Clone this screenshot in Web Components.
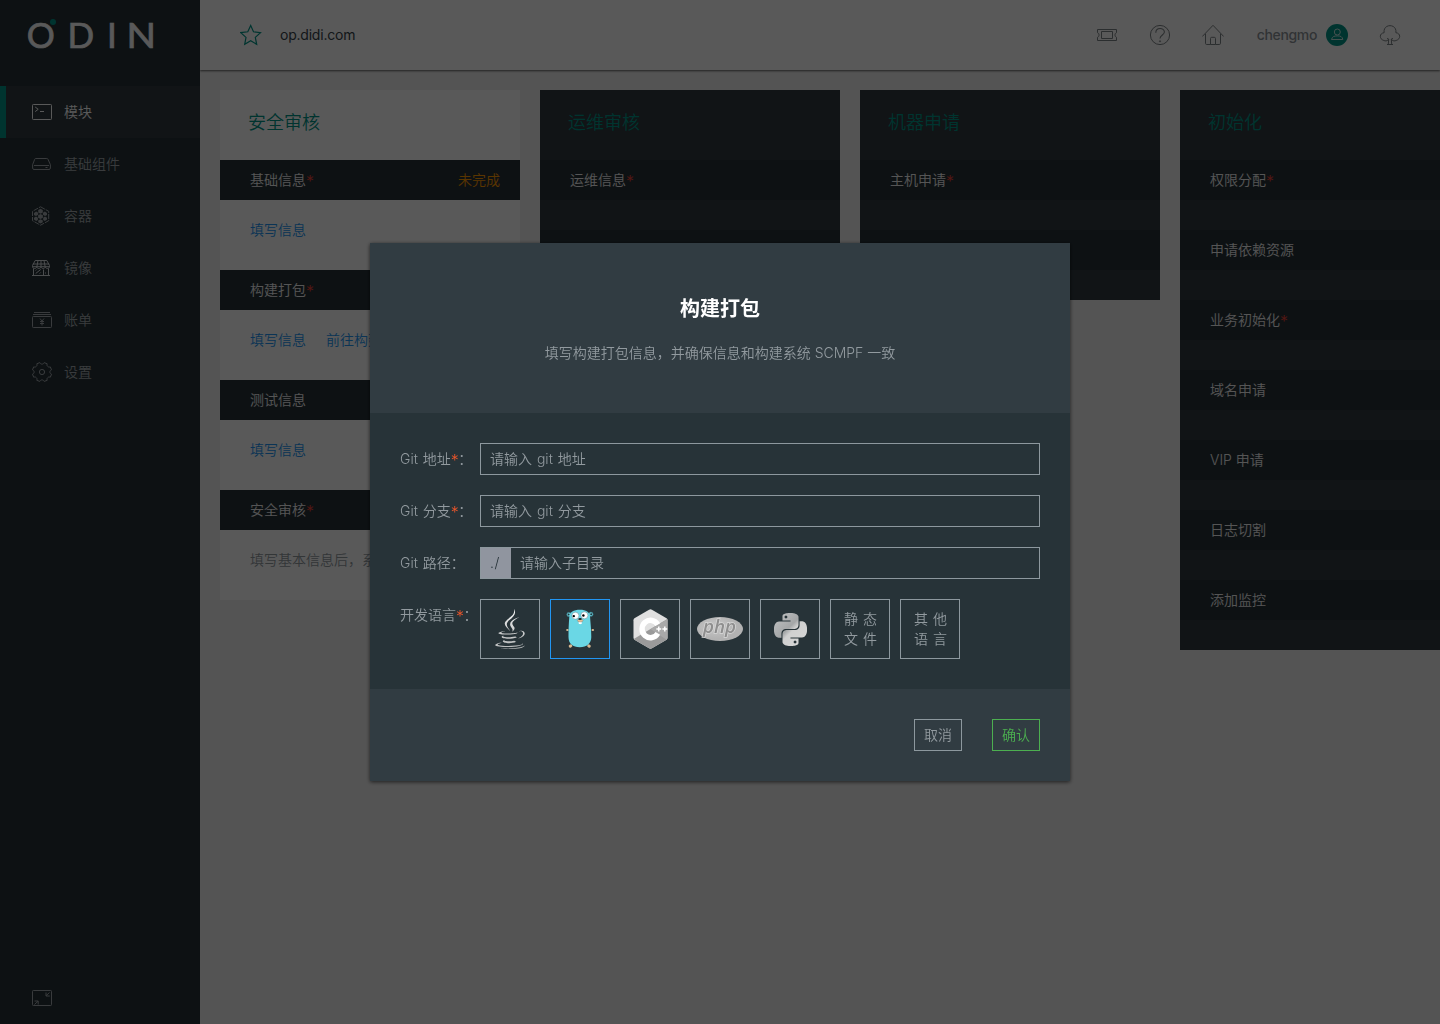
<!DOCTYPE html>
<html lang="zh-CN">
<head>
<meta charset="utf-8">
<title>ODIN</title>
<style>
html,body{margin:0;height:100%;overflow:hidden}
body{font:14px/20px Inter,"Noto Sans CJK SC",sans-serif;font-weight:350;background:#f0f0f0;
--ink:#263238;--slate:#313b40;--brand:#009688;--link:#2196f3;--mute:#929a9f;--line:#8d989e}
</style>
</head>
<body>
<odin-app></odin-app>
<odin-dialog heading="构建打包" note="填写构建打包信息，并确保信息和构建系统 SCMPF 一致">
  <form-row label="Git 地址" required><text-field>请输入 git 地址</text-field></form-row>
  <form-row label="Git 分支" required><text-field>请输入 git 分支</text-field></form-row>
  <form-row label="Git 路径"><text-field prefix="./">请输入子目录</text-field></form-row>
  <form-row label="开发语言" required>
    <lang-tile icon="java"></lang-tile><lang-tile icon="go" selected></lang-tile><lang-tile icon="cpp"></lang-tile><lang-tile icon="php"></lang-tile><lang-tile icon="python"></lang-tile><lang-tile>静 态<br>文 件</lang-tile><lang-tile>其 他<br>语 言</lang-tile>
  </form-row>
  <flat-button slot="actions">取消</flat-button>
  <flat-button slot="actions" primary>确认</flat-button>
</odin-dialog>
<script>
const svg=(w,h,body,attrs='')=>`<svg width="${w}" height="${h}" viewBox="0 0 ${w} ${h}" fill="none" stroke="currentColor" stroke-width="1" ${attrs}>${body}</svg>`;
const ICONS={
terminal:svg(20,20,'<rect x=".5" y="2.5" width="19" height="15" rx=".8"/><path d="M3.2 5l3 2.300-3 2.300M8 9.500h4"/>'),
disk:svg(20,20,'<path d="M3.600 4.500h11.200c.6 0 1 .3 1.200.8l2.400 5.400v3.400c0 .8-.6 1.400-1.400 1.400H2c-.8 0-1.400-.6-1.400-1.400v-3.400L2.700 5.300c.2-.5.5-.8.9-.8zM2 11.500h15M13.500 13.500h2"/>'),
hive:svg(20,20,'<path d="M8.500.8L16.700 5.300v9.400L8.500 19.200.5 14.700V5.300z" stroke-dasharray="5 1"/><g fill="currentColor" stroke="none"><path d="M8.500 2.800l2.300 1.300v2.400L8.500 7.800 6.200 6.500V4.100zM8.500 8l2.400 1.300v2.500l-2.400 1.300-2.400-1.300V9.300zM8.500 13.300l2.300 1.200v1.700l-2.300 1.300-2.300-1.300v-1.700zM4.200 5.600l2 1.200v2L4 10 2 8.900V7zM12.900 5.600L15 7v1.900L13 10l-2.100-1.200v-2zM4 10.600l1.900 1.100v2.300l-1.700 1L2 13.500v-1.800zM13 10.600l2 1.100v1.800L12.900 15l-1.700-1v-2.300z"/></g>'),
shop:svg(20,20,'<path d="M3.200 2.500h11.600l2.700 5v1.200H.5V7.500zM.8 6h16.400M6 2.500L5 8M9 2.500V8M12 2.500L13 8M1.500 10.500v7M16.500 10.500v7M0 17.500h18M.5 8.500c0 2.600 4.200 2.600 4.200 0 0 2.600 4.300 2.600 4.300 0 0 2.600 4.300 2.600 4.300 0 0 2.600 4.200 2.600 4.200 0M11.500 17.500v-6M3.700 15.500l5-4M3.700 12.500l1-1M7.700 15.500l1-1M13.500 14.500v1"/>','style="color:#d8dde0"'),
bill:svg(20,20,'<path d="M2 2.500h16M1 4.500h18"/><rect x=".5" y="6.500" width="19" height="11" rx=".8"/><path d="M8 8.500l2 2.500 2-2.500M10 11v4.500M8 11.500h4M8 13.500h4"/>'),
gear:svg(20,20,'<circle cx="10" cy="10" r="2.600"/><path d="M7.800.6c.7 1.300 1.300 1.500 2.200 1.500s1.500-.2 2.200-1.500l3 1.200c-.4 1.400-.2 2 .5 2.600.6.6 1.200.9 2.600.5l1.200 2.900c-1.300.7-1.600 1.300-1.600 2.200s.3 1.500 1.600 2.200l-1.200 3c-1.400-.4-2-.2-2.600.5-.7.6-.9 1.200-.5 2.600l-3 1.100c-.7-1.200-1.300-1.500-2.200-1.500s-1.500.3-2.200 1.500l-3-1.100c.4-1.400.2-2-.5-2.600-.6-.7-1.200-.9-2.600-.5l-1.200-3c1.300-.7 1.600-1.300 1.600-2.200s-.3-1.500-1.600-2.200l1.200-2.900c1.400.4 2 .1 2.600-.5.7-.6.9-1.200.5-2.600z"/>'),
collapse:svg(20,20,'<rect x=".5" y="2.500" width="19" height="15" rx=".8"/><path d="M17.500 4.500l-3.500 3.300M14 4.500v3.500h3.800M2.500 16.500L6 13.200M2.500 13h3.700v3.500"/>'),
star:svg(22,22,'<path d="M10.700 1.500l2.800 6.300 7 .8-5.200 4.800 1.400 6.900-6-3.500-6 3.500 1.300-6.900L.8 8.600l7-.8z" stroke-width="1.200"/>'),
ticket:svg(22,22,'<path d="M1.500 5.500h19v3.200c-2 .5-2 4.100 0 4.600v3.200h-19v-3.200c2-.5 2-4.100 0-4.600zM5.500 7.500h11v7h-11z"/>'),
help:svg(22,22,'<circle cx="11" cy="11" r="9.600"/><path d="M6.800 8.700c0-5.800 8.600-5.300 8.600-.6 0 2.700-4.400 3.200-4.400 6.400" stroke-width="1.100"/><circle cx="11" cy="17.300" r=".6"/>'),
home:svg(22,22,'<path d="M.3 12.500L11 1.300l10.700 11.200M3.500 9.800v9.500c0 .8.400 1.200 1.200 1.200H8.500v-6c0-.8.400-1.200 1.200-1.200h2.600c.8 0 1.200.4 1.200 1.200v6h3.800c.8 0 1.200-.4 1.200-1.200V9.800M8.500 20.500h5"/>'),
user:svg(22,22,'<circle cx="11" cy="11" r="11" fill="#009688" stroke="none"/><g stroke="#c8e6e3"><circle cx="11.300" cy="8" r="3"/><path d="M5.500 15.500c.8-3 2.600-3.600 5.800-3.600s5 .6 5.500 3.600z"/></g>'),
tree:svg(22,22,'<path d="M9.200 15.800c-1.300 1.500-3 1.200-4.300.7-5-1.500-4.600-7.300.2-7.800C3.800-.7 18.200-.7 16.900 8.700c4.800.5 5.200 6.300.2 7.800-1.300.5-3 .8-4.300-.7M9.300 20.300l.4-5.300-1.700-.5M12.700 20.300l-.4-5.300 1.700-.5M8 20.500h6"/>'),
java:`<svg width="40" height="40" viewBox="0 0 24 24"><defs><linearGradient id="j" x2="0" y2="1"><stop stop-color="#f4f4f4"/><stop offset=".6" stop-color="#c8cacb"/><stop offset="1" stop-color="#b8babb"/></linearGradient></defs><path fill="url(#j)" d="M8.851 18.56s-.917.534.653.714c1.902.218 2.874.187 4.969-.211 0 0 .552.346 1.321.646-4.699 2.013-10.633-.118-6.943-1.149M8.276 15.933s-1.028.761.542.924c2.032.209 3.636.227 6.413-.308 0 0 .384.389.987.602-5.679 1.661-12.007.13-7.942-1.218M13.116 11.475c1.158 1.333-.304 2.533-.304 2.533s2.939-1.518 1.589-3.418c-1.261-1.772-2.228-2.652 3.007-5.688 0-.001-8.216 2.051-4.292 6.573M19.33 20.504s.679.559-.747.991c-2.712.822-11.288 1.069-13.669.033-.856-.373.75-.89 1.254-.998.527-.114.828-.093.828-.093-.953-.671-6.156 1.317-2.643 1.887 9.58 1.553 17.462-.7 14.977-1.82M9.292 13.21s-4.362 1.036-1.544 1.412c1.189.159 3.561.123 5.77-.062 1.806-.152 3.618-.477 3.618-.477s-.637.272-1.098.587c-4.429 1.165-12.986.623-10.522-.568 2.082-1.006 3.776-.892 3.776-.892M17.116 17.584c4.503-2.34 2.421-4.589.968-4.285-.355.074-.515.138-.515.138s.132-.207.385-.297c2.875-1.011 5.086 2.981-.928 4.562 0-.001.07-.062.09-.118M14.401 0s2.494 2.494-2.365 6.33c-3.896 3.077-.888 4.832-.001 6.836-2.274-2.053-3.943-3.858-2.824-5.539 1.644-2.469 6.197-3.665 5.19-7.627M9.734 23.924c4.322.277 10.959-.153 11.116-2.198 0 0-.302.775-3.572 1.391-3.688.694-8.239.613-10.937.168 0-.001.553.457 3.393.639"/></svg>`,
go:`<svg width="30" height="40" viewBox="0 0 30 40"><g fill="#d8b890"><ellipse cx="2.400" cy="21" rx="1.300" ry="1"/><ellipse cx="27.800" cy="21" rx="1.300" ry="1"/><ellipse cx="5.500" cy="37" rx="1.900" ry="1.500" transform="rotate(-35 5.500 37)"/><ellipse cx="24" cy="37" rx="1.900" ry="1.500" transform="rotate(35 24 37)"/></g><circle cx="3.900" cy="5.500" r="2.200" fill="#6ad7e5" stroke="#315c66" stroke-width=".6"/><circle cx="25.900" cy="5.200" r="2.200" fill="#6ad7e5" stroke="#315c66" stroke-width=".6"/><circle cx="3.600" cy="5.600" r="1" fill="#24343a"/><circle cx="26.200" cy="5.200" r="1" fill="#24343a"/><path d="M15 .8c6 0 9.700 2.200 10.100 6.900.2 5.300 1.200 11 1.200 20.300 0 6.500-4.500 10.300-11.500 10.300S3.500 34.600 3.500 28C3.500 20 3.800 14 4.300 8 4.700 3.200 8.500.8 15 .8z" fill="#6ad7e5"/><circle cx="10.400" cy="6.700" r="3.500" fill="#fff" stroke="#52707a" stroke-width=".4"/><circle cx="19.400" cy="6.300" r="3.500" fill="#fff" stroke="#52707a" stroke-width=".4"/><circle cx="8.800" cy="7.100" r="1.200"/><circle cx="18.400" cy="6.500" r="1.200"/><path d="M13.500 12.300h3.200v2.500c0 .5-2.900.5-2.900 0z" fill="#fff"/><ellipse cx="15.200" cy="11.500" rx="2.800" ry="1.500" fill="#e4bf98" stroke="#6e5b4a" stroke-width=".3"/><ellipse cx="15.100" cy="9.900" rx="1.700" ry="1" fill="#172024"/></svg>`,
cpp:`<svg width="35" height="40" viewBox="0 0 36 40" preserveAspectRatio="none"><path d="M16.500.7Q18 0 19.500.7L34.500 9.300Q35.500 10 35.500 11.200V28.800Q35.500 30 34.500 30.700L19.500 39.300Q18 40 16.500 39.300L1.500 30.700Q.5 30 .5 28.800V11.200Q.5 10 1.500 9.300z" fill="#e0e0e0"/><path d="M.7 30L35.300 10Q35.500 10.500 35.500 11.200V28.800Q35.500 30 34.500 30.700L19.500 39.300Q18 40 16.500 39.300L1.500 30.700Q1 30.400.7 30z" fill="#9a9a9a"/><path d="M35.300 10.200V28.800q0 1.400-.7 1.900L18 20z" fill="#a9a9a9"/><path d="M25.500 15.600A8.700 8.700 0 1 0 25.500 24.400" fill="none" stroke="#fff" stroke-width="5.600"/><path d="M24 20h5M26.500 17.500v5M30.200 20h5M32.700 17.500v5" stroke="#fff" stroke-width="1.500"/></svg>`,
php:`<svg width="48" height="26" viewBox="0 0 48 26" overflow="visible"><defs><radialGradient id="p" cx=".4" cy=".4"><stop stop-color="#c8c8c8"/><stop offset="1" stop-color="#b2b2b2"/></radialGradient></defs><ellipse cx="24" cy="13" rx="23" ry="12" fill="url(#p)"/><text x="23.500" y="17" text-anchor="middle" font-family="Open Sans,sans-serif" font-size="18" font-weight="600" font-style="italic" fill="#8e8e8e" stroke="#d8d8d8" stroke-width="1.400" paint-order="stroke" textLength="33" lengthAdjust="spacingAndGlyphs">php</text></svg>`,
python:`<svg width="33" height="33" viewBox="0 0 24 24"><defs><linearGradient id="y" x2="1" y2="1"><stop stop-color="#c2c4c5"/><stop offset=".45" stop-color="#a4a6a7"/><stop offset=".55" stop-color="#d0d0d0"/><stop offset="1" stop-color="#d8d8d8"/></linearGradient></defs><path fill="url(#y)" d="M14.25.18l.9.2.73.26.59.3.45.32.34.34.25.34.16.33.1.3.04.26.02.2-.01.13V8.5l-.05.63-.13.55-.21.46-.26.38-.3.31-.33.25-.35.19-.35.14-.33.1-.3.07-.26.04-.21.02H8.77l-.69.05-.59.14-.5.22-.41.27-.33.32-.27.35-.2.36-.15.37-.1.35-.07.32-.04.27-.02.21v3.06H3.17l-.21-.03-.28-.07-.32-.12-.35-.18-.36-.26-.36-.36-.35-.46-.32-.59-.28-.73-.21-.88-.14-1.05-.05-1.23.06-1.22.16-1.04.24-.87.32-.71.36-.57.4-.44.42-.33.42-.24.4-.16.36-.1.32-.05.24-.01h.16l.06.01h8.16v-.83H6.18l-.01-2.75-.02-.37.05-.34.11-.31.17-.28.25-.26.31-.23.38-.2.44-.18.51-.15.58-.12.64-.1.71-.06.77-.04.84-.02 1.27.05zm-6.3 1.98l-.23.33-.08.41.08.41.23.34.33.22.41.09.41-.09.33-.22.23-.34.08-.41-.08-.41-.23-.33-.33-.22-.41-.09-.41.09zm13.09 3.95l.28.06.32.12.35.18.36.27.36.35.35.47.32.59.28.73.21.88.14 1.04.05 1.23-.06 1.23-.16 1.04-.24.86-.32.71-.36.57-.4.45-.42.33-.42.24-.4.16-.36.09-.32.05-.24.02-.16-.01h-8.22v.82h5.84l.01 2.76.02.36-.05.34-.11.31-.17.29-.25.25-.31.24-.38.2-.44.17-.51.15-.58.13-.64.09-.71.07-.77.04-.84.01-1.27-.04-1.07-.14-.9-.2-.73-.25-.59-.3-.45-.33-.34-.34-.25-.34-.16-.33-.1-.3-.04-.25-.02-.2.01-.13v-5.34l.05-.64.13-.54.21-.46.26-.38.3-.32.33-.24.35-.2.35-.14.33-.1.3-.06.26-.04.21-.02.13-.01h5.84l.69-.05.59-.14.5-.21.41-.28.33-.32.27-.35.2-.36.15-.36.1-.35.07-.32.04-.28.02-.21V6.07h2.09l.14.01zm-6.47 14.25l-.23.33-.08.41.08.41.23.33.33.23.41.08.41-.08.33-.23.23-.33.08-.41-.08-.41-.23-.33-.33-.23-.41-.08-.41.08z"/></svg>`
};
const STAR='<span class="req">*</span>';
const REQ_CSS='.req{display:inline-block;width:7.500px;height:16px;font:300 16px/20px Inter,sans-serif;vertical-align:-2px;color:var(--req,#f44336)}';
function define(name,css,view){
  customElements.define(name,class extends HTMLElement{
    connectedCallback(){
      if(this.shadowRoot)return;
      this.attachShadow({mode:'open'}).innerHTML=`<style>*{box-sizing:border-box}:host{box-sizing:border-box}svg{display:block}${css}</style>${view(this)}`;
    }
  });
}
const at=(e,n)=>e.getAttribute(n)||'';

define('odin-icon',':host{display:block;flex:none}',e=>ICONS[at(e,'name')]);

define('nav-item',`:host{display:flex;align-items:center;gap:12px;height:52px;padding-left:26px;border-left:6px solid transparent;color:#a3aaae}
:host([active]){background:var(--slate);border-color:var(--brand);color:#fff}`,
e=>`<odin-icon name="${at(e,'icon')}"></odin-icon><slot></slot>`);

define('side-bar',`:host{display:flex;flex-direction:column;width:200px;background:var(--ink);color:#fff;padding-bottom:16px}
nav{flex:1}.logo{height:86px}.fold{padding-left:32px;color:#a3aaae}`,
()=>`<div class="logo"><svg width="200" height="86" font-family="Lato" font-size="35" font-weight="400" fill="#fff" stroke="#fff" stroke-width=".7"><text y="47.700" x="26.700 67.500 107">ODI</text><text x="126.600" y="47.700" textLength="29.500" lengthAdjust="spacingAndGlyphs">N</text><circle cx="53" cy="22" r="3" fill="#009688" stroke="none"/></svg></div>
<nav><nav-item icon="terminal" active>模块</nav-item><nav-item icon="disk">基础组件</nav-item><nav-item icon="hive">容器</nav-item><nav-item icon="shop">镜像</nav-item><nav-item icon="bill">账单</nav-item><nav-item icon="gear">设置</nav-item></nav>
<div class="fold"><odin-icon name="collapse"></odin-icon></div>`);

define('top-bar',`:host{display:flex;align-items:center;height:70px;padding:0 39px 0 40px;background:#fff;box-shadow:0 1px 2px rgba(0,0,0,.6);color:#37434a;font-weight:400}
.site{margin-left:18px;flex:1;letter-spacing:-.22px}.tools{display:flex;align-items:center;gap:31px;color:#7d8386}.user{display:flex;align-items:center;gap:9px;width:93px;justify-content:flex-end;font-weight:500;color:#8c9399;letter-spacing:-.36px}.star{color:var(--brand)}`,
()=>`<odin-icon class="star" name="star"></odin-icon><span class="site">op.didi.com</span>
<div class="tools"><odin-icon name="ticket"></odin-icon><odin-icon name="help"></odin-icon><odin-icon name="home"></odin-icon><span class="user">chengmo<odin-icon name="user"></odin-icon></span><odin-icon name="tree"></odin-icon></div>`);

define('stage-card',`:host{display:block;flex:none;width:300px;background:var(--slate)}
:host([current]){background:#fff}
h2{margin:0;height:70px;padding:20px 28px;font-size:18px;line-height:25px;font-weight:350;color:var(--brand)}`,
e=>`<h2>${at(e,'heading')}</h2><slot></slot>`);

define('stage-step',`:host{display:block}
header{display:flex;justify-content:space-between;height:40px;padding:10px 20px 10px 30px;background:var(--ink);color:#f4f4f4}
.state{color:#ff9800}.body{display:flex;gap:20px;height:30px;white-space:nowrap;color:var(--mute)}
:host([open]) .body{height:70px;padding:20px 30px}::slotted(a){color:var(--link)}${REQ_CSS}`,
e=>`<header><span>${at(e,'label')}${e.hasAttribute('required')?STAR:''}</span><span class="state">${at(e,'state')}</span></header><div class="body"><slot></slot></div>`);

define('odin-app',`:host{display:grid;grid-template-columns:200px 1240px;height:1024px;width:1440px}
main{display:flex;flex-direction:column;overflow:hidden}.board{display:flex;align-items:flex-start;gap:20px;padding:20px}top-bar{flex:none}`,
()=>`<side-bar></side-bar><main><top-bar></top-bar><div class="board">
<stage-card heading="安全审核" current><stage-step open required label="基础信息" state="未完成"><a>填写信息</a></stage-step><stage-step open required label="构建打包"><a>填写信息</a><a>前往构建</a></stage-step><stage-step open label="测试信息"><a>填写信息</a></stage-step><stage-step open required label="安全审核"><span>填写基本信息后，系</span></stage-step></stage-card>
<stage-card heading="运维审核"><stage-step required label="运维信息"></stage-step><stage-step></stage-step></stage-card>
<stage-card heading="机器申请"><stage-step required label="主机申请"></stage-step><stage-step></stage-step></stage-card>
<stage-card heading="初始化"><stage-step required label="权限分配"></stage-step><stage-step label="申请依赖资源"></stage-step><stage-step required label="业务初始化"></stage-step><stage-step label="域名申请"></stage-step><stage-step label="VIP 申请"></stage-step><stage-step label="日志切割"></stage-step><stage-step label="添加监控"></stage-step></stage-card>
</div></main>`);

define('form-row',`:host{display:flex;color:var(--mute);--req:#f0562a;word-spacing:1px}
label{width:80px;padding-top:6px;white-space:nowrap}.field{display:flex;flex:1;gap:10px}${REQ_CSS}.req{font-weight:350}`,
e=>`<label>${at(e,'label')}${e.hasAttribute('required')?STAR:''}：</label><div class="field"><slot></slot></div>`);

define('text-field',`:host{display:flex;flex:1;height:32px;border:1px solid var(--line);line-height:30px}
.pre{width:30px;background:#90959f;color:var(--ink);padding-left:9px;letter-spacing:.5px}.txt{padding-left:9px}`,
e=>`${e.hasAttribute('prefix')?`<span class="pre">${at(e,'prefix')}</span>`:''}<span class="txt"><slot></slot></span>`);

define('lang-tile',`:host{display:flex;align-items:center;justify-content:center;text-align:center;width:60px;height:60px;border:1px solid var(--line);word-spacing:1.200px}
:host([selected]){border-color:var(--link)}:host(:not([icon])){padding-left:1px}:host([icon=cpp]){padding-left:1px}`,
e=>e.hasAttribute('icon')?`<odin-icon name="${at(e,'icon')}"></odin-icon>`:'<span><slot></slot></span>');

define('flat-button',`:host{display:block;height:32px;padding:0 9px;line-height:30px;border:1px solid var(--line);color:var(--mute)}
:host([primary]){color:#4caf50;border-color:#4caf50}`,()=>'<slot></slot>');

define('odin-dialog',`:host{position:fixed;inset:0;display:flex;align-items:center;justify-content:center;background:rgba(0,0,0,.65)}
section{width:700px;background:#313c42;box-shadow:0 1px 4px rgba(0,0,0,.65)}
header{height:170px;padding-top:51px;text-align:center;color:var(--mute)}
h1{margin:0 0 19px;font-size:20px;line-height:30px;font-weight:600;color:#fff}
.body{display:flex;flex-direction:column;gap:20px;padding:30px;background:#273338}
footer{display:flex;justify-content:flex-end;gap:30px;padding:30px}`,
e=>`<section><header><h1>${at(e,'heading')}</h1><div>${at(e,'note')}</div></header><div class="body"><slot></slot></div><footer><slot name="actions"></slot></footer></section>`);
</script>
</body>
</html>
